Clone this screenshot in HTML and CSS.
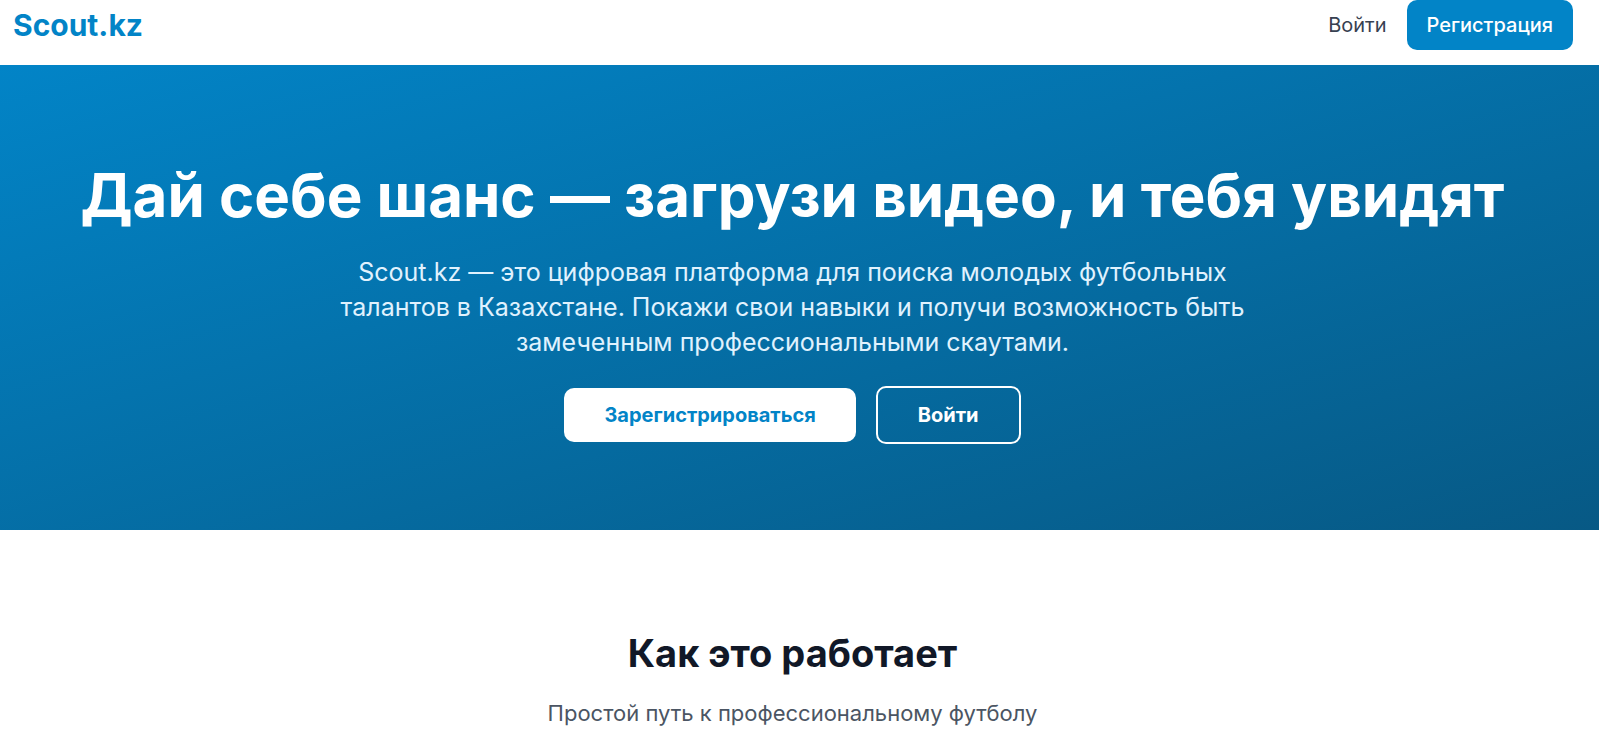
FILE: index.html
```html
<!DOCTYPE html>
<html lang="ru">
<head>
<meta charset="utf-8">
<title>Scout.kz</title>
<link rel="stylesheet" href="styles.css">
</head>
<body>
<header class="header">
  <a class="logo" href="#">Scout.kz</a>
  <nav class="nav">
    <a class="nav-link" href="#">Войти</a>
    <a class="nav-button" href="#">Регистрация</a>
  </nav>
</header>
<main>
  <section class="hero">
    <h1 class="hero-title">Дай себе шанс — загрузи видео, и тебя увидят</h1>
    <p class="hero-text">Scout.kz — это цифровая платформа для поиска молодых футбольных талантов в Казахстане. Покажи свои навыки и получи возможность быть замеченным профессиональными скаутами.</p>
    <div class="actions">
      <a class="button button-solid" href="#">Зарегистрироваться</a>
      <a class="button button-outline" href="#">Войти</a>
    </div>
  </section>
  <section class="steps">
    <h2 class="steps-title">Как это работает</h2>
    <p class="steps-text">Простой путь к профессиональному футболу</p>
  </section>
</main>
</body>
</html>
```
FILE: styles.css
```css
* { box-sizing: border-box; margin: 0; padding: 0; }
html { overflow-x: hidden; scrollbar-width: none; }
body { font-family: Inter, "Liberation Sans", sans-serif; color: #111827; background: #fff; }
a { text-decoration: none; }
.header { display: flex; justify-content: space-between; align-items: center; padding: 0 26px 15px 13px; }
.logo { font-size: 30px; line-height: 40px; font-weight: 700; color: #0284c7; }
.nav { display: flex; align-items: center; gap: 20px; }
.nav-link { font-size: 20px; line-height: 30px; color: #374151; }
.nav-button { padding: 10px 20px; border-radius: 10px; background: #0284c7; color: #fff; font-size: 20px; line-height: 30px; font-weight: 500; }
.hero { display: flex; flex-direction: column; align-items: center; padding: 100px 40px 86px 26px; background: linear-gradient(to bottom right, #0284c7, #075985); color: #fff; text-align: center; }
.hero-title { font-size: 60px; line-height: 60px; font-weight: 700; margin-bottom: 30px; }
.hero-text { max-width: 960px; font-size: 25px; line-height: 35px; color: #e0f2fe; margin-bottom: 26px; }
.actions { display: flex; align-items: center; gap: 20px; }
.button { padding: 12px 40px; border-radius: 10px; font-size: 20px; line-height: 30px; font-weight: 700; }
.button-solid { background: #fff; color: #0284c7; }
.button-outline { border: 2px solid #fff; color: #fff; }
.steps { padding: 100px 40px 40px 26px; text-align: center; }
.steps-title { font-size: 38px; line-height: 46px; font-weight: 700; margin-bottom: 20px; }
.steps-text { font-size: 22px; line-height: 35px; color: #4b5563; }
```
